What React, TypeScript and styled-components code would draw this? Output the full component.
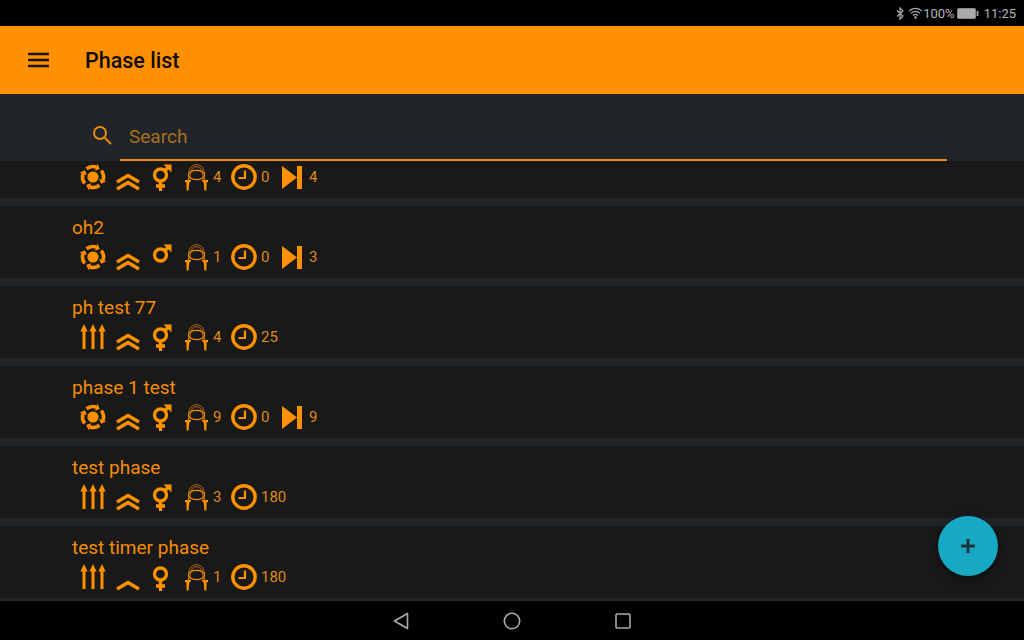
import styled, { createGlobalStyle } from "styled-components"

const ORANGE = "#ff9100"

const GlobalStyle = createGlobalStyle`
  html, body {
    margin: 0;
    padding: 0;
    background: #000;
    font-family: Roboto, "Liberation Sans", sans-serif;
  }
`

const Screen = styled.div`
  width: 1024px;
  height: 640px;
  display: flex;
  flex-direction: column;
  position: relative;
  overflow: hidden;
  background: #191919;
`

const StatusBar = styled.div`
  height: 26px;
  flex: none;
  background: #000;
  color: #b4b4b4;
  font-size: 13px;
  display: flex;
  align-items: center;
  justify-content: flex-end;
  padding-right: 8px;
`

const StatusPercent = styled.span`
  margin-right: 2px;
`

const StatusTime = styled.span`
  margin-left: 5px;
`

const Toolbar = styled.header`
  height: 68px;
  flex: none;
  background: ${ORANGE};
  display: flex;
  align-items: center;
  padding-left: 28px;
  gap: 35px;
`

const ToolbarTitle = styled.h1`
  margin: 0;
  font-size: 21.5px;
  font-weight: 500;
  color: #0d0a05;
`

const SearchPanel = styled.div`
  height: 67px;
  flex: none;
  background: #212529;
  display: flex;
  align-items: flex-end;
  padding-left: 90px;
  position: relative;
  z-index: 1;
`

const SearchIcon = styled.svg`
  width: 24px;
  height: 24px;
  margin-bottom: 14px;
  margin-right: 6px;
`

const SearchField = styled.div`
  width: 827px;
  height: 47px;
  box-sizing: border-box;
  border-bottom: 2px solid #e88a0c;
  padding-left: 9px;
  padding-top: 11px;
  font-size: 19px;
  line-height: 24px;
  color: #a96f1d;
`

const ListViewport = styled.main`
  flex: 1;
  min-height: 0;
  overflow: hidden;
`

const List = styled.ul`
  list-style: none;
  margin: -35px 0 0;
  padding: 0;
`

const Row = styled.li`
  height: 72px;
  box-sizing: border-box;
  background: #191919;
  margin-bottom: 8px;
  padding: 10px 0 0 72px;
  box-shadow: 0 8px 0 #212529;
`

const RowTitle = styled.div`
  height: 24px;
  font-size: 19px;
  line-height: 24px;
  color: #f58c02;
`

const Meta = styled.div`
  display: flex;
  align-items: center;
  height: 30px;
  margin-top: 2px;
  padding-left: 8px;
`

const Slot = styled.span<{ $w: number }>`
  width: ${(p) => p.$w}px;
  flex: none;
  display: flex;
  align-items: center;
`

const Count = styled.span<{ $w: number }>`
  width: ${(p) => p.$w}px;
  flex: none;
  font-size: 15px;
  color: #dd8a16;
  padding-left: 4px;
  box-sizing: border-box;
`

const Fab = styled.button`
  position: absolute;
  left: 938px;
  top: 516px;
  width: 60px;
  height: 60px;
  border: 0;
  padding: 0;
  border-radius: 50%;
  background: #17a8c4;
  box-shadow: 0 3px 8px rgba(0, 0, 0, 0.5);
  display: flex;
  align-items: center;
  justify-content: center;
`

const NavBar = styled.nav`
  height: 39px;
  flex: none;
  background: #000;
  position: relative;
  z-index: 1;
  display: flex;
  align-items: center;
  justify-content: center;
  gap: 94px;
`

function MenuIcon() {
  return (
    <svg width="22" height="16" viewBox="0 0 22 16">
      <path d="M0 2h21M0 8h21M0 14h21" stroke="#1a1206" strokeWidth="2.4" />
    </svg>
  )
}

function Bluetooth() {
  return (
    <svg width="9" height="13" viewBox="0 0 9 13" style={{ marginRight: 3 }}>
      <path d="M1 3.5l6 5.5-3 3V1l3 3-6 5.5" fill="none" stroke="#aaa" strokeWidth="1.2" />
    </svg>
  )
}

function Wifi() {
  return (
    <svg width="15" height="12" viewBox="0 0 15 12">
      <path
        d="M1 4.2a9 9 0 0 1 13 0M3 6.4a6.2 6.2 0 0 1 9 0M5 8.5a3.4 3.4 0 0 1 5 0"
        fill="none"
        stroke="#aaa"
        strokeWidth="1.2"
      />
      <circle cx="7.5" cy="10.5" r="1.2" fill="#aaa" />
    </svg>
  )
}

function Battery() {
  return (
    <svg width="22" height="11" viewBox="0 0 22 11">
      <rect x="0.5" y="0.5" width="18" height="10" rx="1" fill="#aaa" stroke="#888" />
      <rect x="19.5" y="3" width="2" height="5" fill="#999" />
    </svg>
  )
}

function CycleIcon() {
  return (
    <svg width="26" height="26" viewBox="0 0 26 26" fill={ORANGE} style={{ overflow: "visible" }}>
      <circle cx="13" cy="13" r="5.6" />
      {[0, 90, 180, 270].map((angle) => (
        <g key={angle} transform={`rotate(${angle} 13 13)`}>
          <path d="M6.54 4.73A10.5 10.5 0 0 1 16.24 3.01" fill="none" stroke={ORANGE} strokeWidth="3.6" />
          <path d="M17.3 -0.3L19.75 4.96 15 6.82z" />
        </g>
      ))}
    </svg>
  )
}

function ArrowsIcon() {
  return (
    <svg width="26" height="26" viewBox="0 0 26 26" fill={ORANGE}>
      <path d="M4 0l3.6 7.5H5.5V25h-3V7.5H.4z" />
      <path d="M13 0l3.6 7.5h-2.1V25h-3V7.5H9.4z" />
      <path d="M22 0l3.6 7.5h-2.1V25h-3V7.5h-2.1z" />
    </svg>
  )
}

function ChevronIcon({ double }: { double: boolean }) {
  return (
    <svg width="24" height="27" viewBox="0 0 24 27" fill="none" stroke={ORANGE} strokeWidth="3.5">
      {double && <path d="M1 18L12 11.5l11 6.5" />}
      <path d="M1 25L12 18.5l11 6.5" />
    </svg>
  )
}

function GenderIcon({ kind }: { kind: "both" | "male" | "female" }) {
  const male = kind !== "female"
  const female = kind !== "male"
  return (
    <svg width="20" height="27" viewBox="0 0 20 27" fill="none" stroke={ORANGE} strokeWidth="3.3">
      <circle cx="8.5" cy={kind === "female" ? 10 : 11} r="6" />
      {male && (
        <g>
          <path d="M13 6.5L17 2.5" />
          <path d="M11.5 .5h8v8z" fill={ORANGE} stroke="none" />
        </g>
      )}
      {female && <path d="M8.5 17v10M4 22h9" />}
    </svg>
  )
}

function RopeIcon() {
  return (
    <svg width="25" height="27" viewBox="0 0 25 27" fill="none" stroke={ORANGE}>
      <g strokeWidth="1" opacity="0.7">
        <path d="M4.5 17C3.5 4 8 .7 12.5 .7S21.5 4 20.5 17" />
        <path d="M6 17C5.5 7 8.5 2.7 12.5 2.7S19.5 7 19 17" />
      </g>
      <ellipse cx="12.5" cy="11" rx="8" ry="4.6" strokeWidth="1.1" />
      <g fill={ORANGE} stroke="none">
        <path d="M1 16h5.6v2L5.2 18.5 4.6 26.5H2.6L2.4 18.5 1 18z" />
        <path d="M24 16h-5.6v2l1.4.5.6 8h2l.2-8L24 18z" />
      </g>
    </svg>
  )
}

function ClockIcon() {
  return (
    <svg width="26" height="26" viewBox="0 0 26 26" fill="none" stroke={ORANGE}>
      <circle cx="13" cy="13" r="11.2" strokeWidth="3.4" />
      <path d="M14 6.5V14H7.5" strokeWidth="2.2" />
    </svg>
  )
}

function SkipIcon() {
  return (
    <svg width="20" height="23" viewBox="0 0 20 23" fill={ORANGE}>
      <path d="M0 0l15 11.5L0 23z" />
      <rect x="15" y="0" width="5" height="23" />
    </svg>
  )
}

type Phase = {
  title: string
  start: "cycle" | "arrows"
  double: boolean
  gender: "both" | "male" | "female"
  rope: number
  time: number
  skip?: number
}

// the first row is scrolled under the search panel, only its icons show
const phases: Phase[] = [
  { title: "", start: "cycle", double: true, gender: "both", rope: 4, time: 0, skip: 4 },
  { title: "oh2", start: "cycle", double: true, gender: "male", rope: 1, time: 0, skip: 3 },
  { title: "ph test 77", start: "arrows", double: true, gender: "both", rope: 4, time: 25 },
  { title: "phase 1 test", start: "cycle", double: true, gender: "both", rope: 9, time: 0, skip: 9 },
  { title: "test phase", start: "arrows", double: true, gender: "both", rope: 3, time: 180 },
  { title: "test timer phase", start: "arrows", double: false, gender: "female", rope: 1, time: 180 },
]

function PhaseRow({ phase }: { phase: Phase }) {
  return (
    <Row>
      <RowTitle>{phase.title}</RowTitle>
      <Meta>
        <Slot $w={36}>{phase.start === "cycle" ? <CycleIcon /> : <ArrowsIcon />}</Slot>
        <Slot $w={36}>
          <ChevronIcon double={phase.double} />
        </Slot>
        <Slot $w={32}>
          <GenderIcon kind={phase.gender} />
        </Slot>
        <Slot $w={25}>
          <RopeIcon />
        </Slot>
        <Count $w={22}>{phase.rope}</Count>
        <Slot $w={26}>
          <ClockIcon />
        </Slot>
        <Count $w={25}>{phase.time}</Count>
        {phase.skip !== undefined && (
          <>
            <Slot $w={23}>
              <SkipIcon />
            </Slot>
            <Count $w={20}>{phase.skip}</Count>
          </>
        )}
      </Meta>
    </Row>
  )
}

export default function App() {
  return (
    <Screen>
      <GlobalStyle />
      <StatusBar>
        <Bluetooth />
        <Wifi />
        <StatusPercent>100%</StatusPercent>
        <Battery />
        <StatusTime>11:25</StatusTime>
      </StatusBar>
      <Toolbar>
        <MenuIcon />
        <ToolbarTitle>Phase list</ToolbarTitle>
      </Toolbar>
      <SearchPanel>
        <SearchIcon viewBox="0 0 24 24" fill="none" stroke="#e88a0c" strokeWidth="2">
          <circle cx="10" cy="10" r="6" />
          <path d="M14.5 14.5L21 21" />
        </SearchIcon>
        <SearchField>Search</SearchField>
      </SearchPanel>
      <ListViewport>
        <List>
          {phases.map((phase, i) => (
            <PhaseRow key={i} phase={phase} />
          ))}
        </List>
      </ListViewport>
      <NavBar>
        <svg width="16" height="18" viewBox="0 0 16 18" fill="none" stroke="#aaa" strokeWidth="1.6">
          <path d="M14.5 1.5v15L1.5 9z" strokeLinejoin="round" />
        </svg>
        <svg width="18" height="18" viewBox="0 0 18 18" fill="none" stroke="#aaa" strokeWidth="1.6">
          <circle cx="9" cy="9" r="7.7" />
        </svg>
        <svg width="16" height="16" viewBox="0 0 16 16" fill="none" stroke="#aaa" strokeWidth="1.6">
          <rect x="1" y="1" width="14" height="14" rx="1" />
        </svg>
      </NavBar>
      <Fab aria-label="Add phase">
        <svg width="14" height="14" viewBox="0 0 14 14" stroke="#1f3540" strokeWidth="3">
          <path d="M7 0v14M0 7h14" />
        </svg>
      </Fab>
    </Screen>
  )
}
